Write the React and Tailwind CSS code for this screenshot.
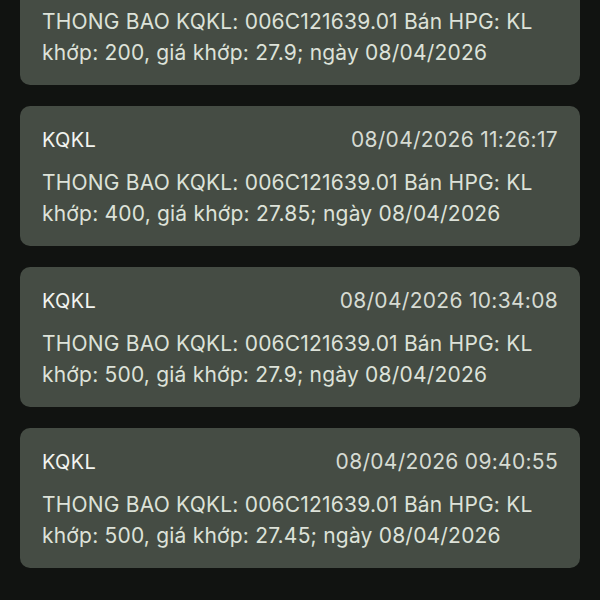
const thongBao = [
  { time: "08/04/2026 11:45:02", kl: 200, gia: "27.9" },
  { time: "08/04/2026 11:26:17", kl: 400, gia: "27.85" },
  { time: "08/04/2026 10:34:08", kl: 500, gia: "27.9" },
  { time: "08/04/2026 09:40:55", kl: 500, gia: "27.45" },
];

function TheThongBao({ item }) {
  return (
    <div className="bg-[#454c44] rounded-[10px] px-[22px] pt-[22px] pb-[17px]">
      <div className="flex justify-between items-center h-[24px] text-[20px] leading-[24px] tracking-[0.3px]">
        <span className="text-[#f2f4f0]">KQKL</span>
        <span className="text-[21px] text-[#d6dbd3]">{item.time}</span>
      </div>
      <p className="mt-[15px] text-[21px] leading-[31px] tracking-[0.2px] text-[#dde2d9]">
        THONG BAO KQKL: 006C121639.01 Bán HPG: KL khớp: {item.kl}, giá khớp:{" "}
        {item.gia}; ngày 08/04/2026
      </p>
    </div>
  );
}

export default function App() {
  return (
    <div
      className="h-[600px] overflow-hidden bg-[#111311]"
      style={{ fontFamily: "Inter, Roboto, sans-serif" }}
    >
      <div className="flex flex-col gap-[21px] px-[20px] mt-[-55px]">
        {thongBao.map((item) => (
          <TheThongBao key={item.time} item={item} />
        ))}
      </div>
    </div>
  );
}
